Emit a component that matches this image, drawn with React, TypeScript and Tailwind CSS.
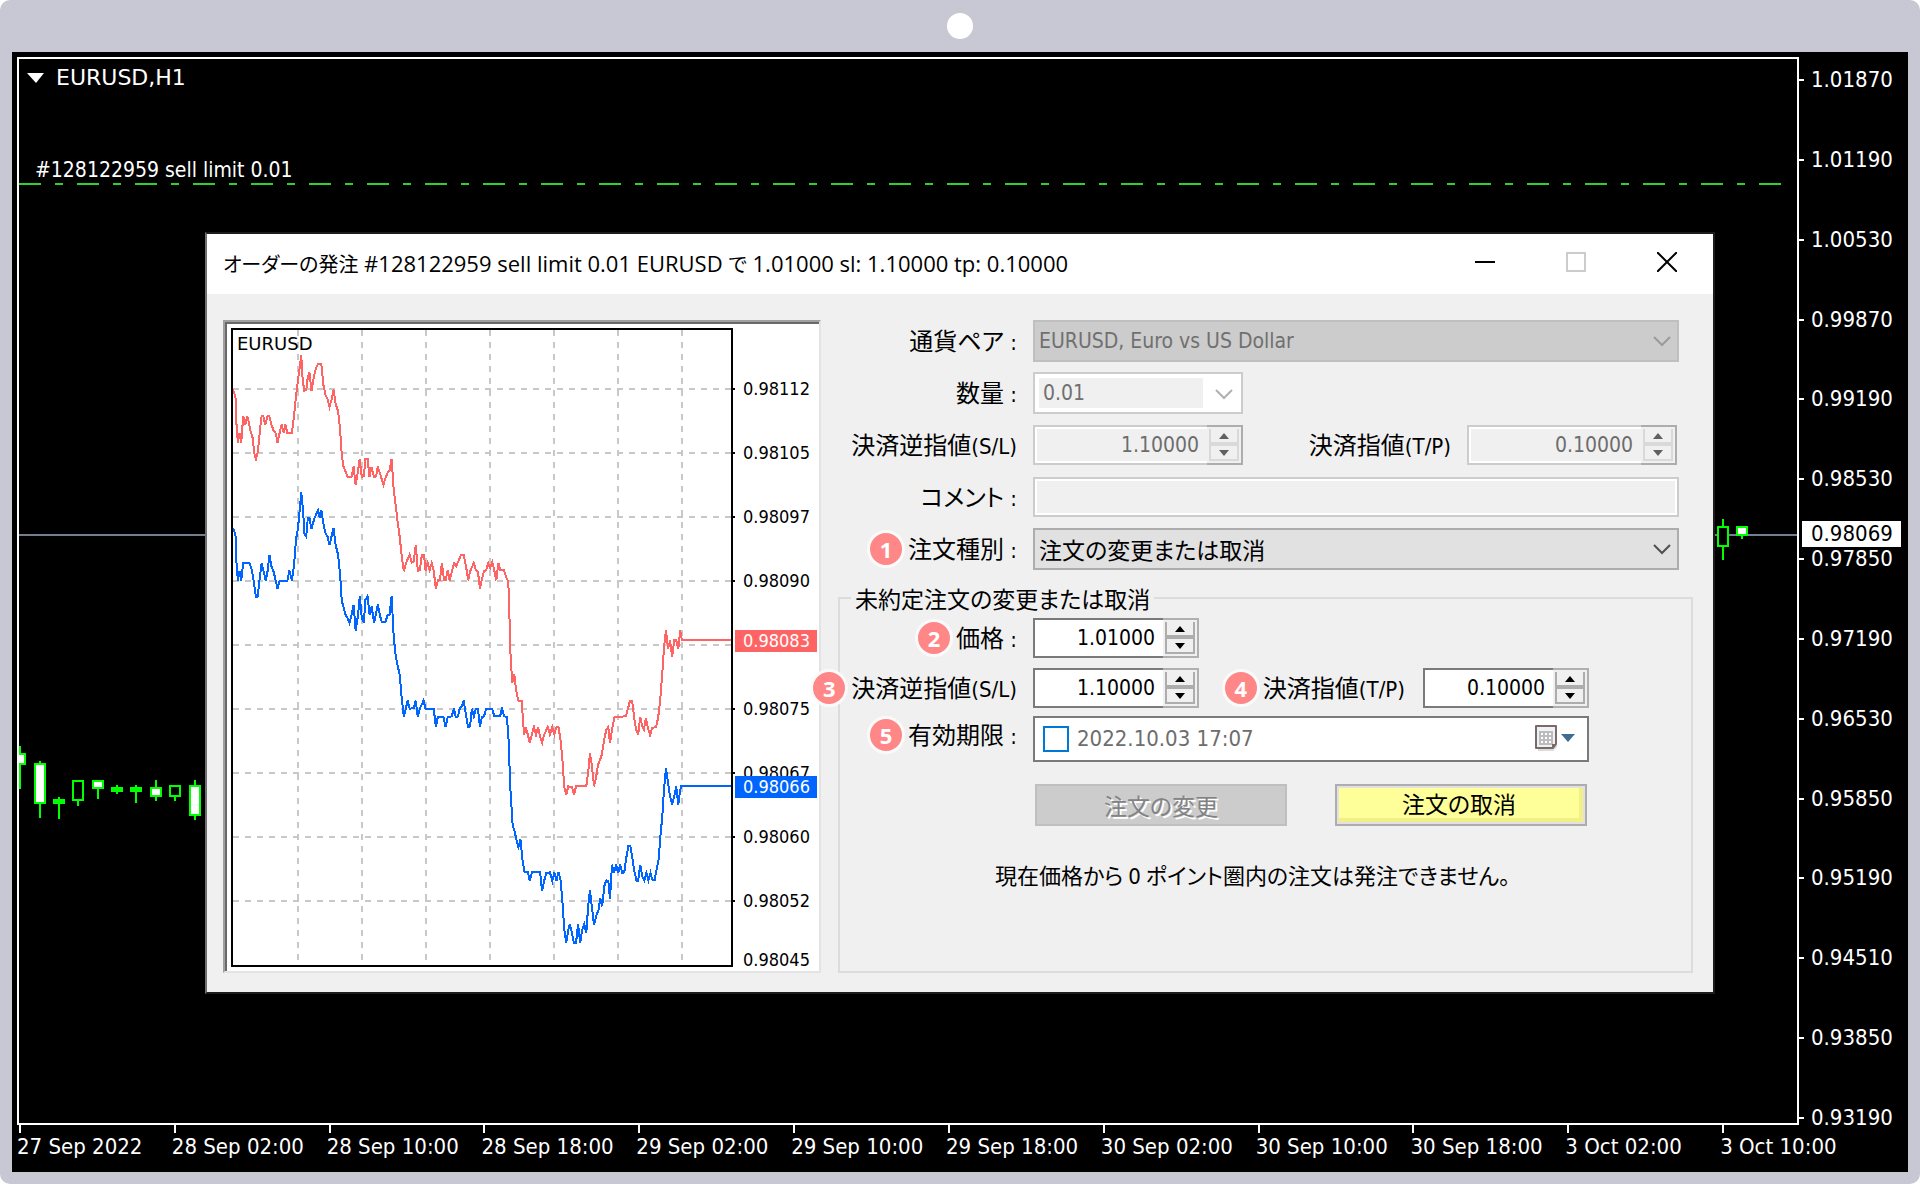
import React, { useState } from 'react';

const LATIN = "font-['DejaVu_Sans_Condensed','DejaVu_Sans',sans-serif]";
const JP = "font-['Noto_Sans_CJK_JP',sans-serif] [font-feature-settings:'palt']";

const prices = [
  '1.01870', '1.01190', '1.00530', '0.99870', '0.99190', '0.98530', '0.97850',
  '0.97190', '0.96530', '0.95850', '0.95190', '0.94510', '0.93850', '0.93190',
];

const times = [
  '27 Sep 2022', '28 Sep 02:00', '28 Sep 10:00', '28 Sep 18:00', '29 Sep 02:00', '29 Sep 10:00',
  '29 Sep 18:00', '30 Sep 02:00', '30 Sep 10:00', '30 Sep 18:00', '3 Oct 02:00', '3 Oct 10:00',
];

interface Candle {
  x: number;
  high: number;
  low: number;
  top: number;
  bottom: number;
  fill: string;
}

const candles: Candle[] = [
  { x: 1, high: 687, low: 730, top: 694, bottom: 706, fill: '#fff' },
  { x: 21, high: 702, low: 759, top: 704, bottom: 745, fill: '#fff' },
  { x: 40, high: 738, low: 760, top: 740, bottom: 745, fill: '#0f0' },
  { x: 59, high: 721, low: 747, top: 721, bottom: 742, fill: '#000' },
  { x: 79, high: 721, low: 740, top: 721, bottom: 730, fill: '#fff' },
  { x: 98, high: 726, low: 735, top: 728, bottom: 733, fill: '#0f0' },
  { x: 117, high: 726, low: 744, top: 728, bottom: 733, fill: '#0f0' },
  { x: 137, high: 721, low: 742, top: 728, bottom: 738, fill: '#fff' },
  { x: 156, high: 726, low: 742, top: 726, bottom: 738, fill: '#000' },
  { x: 176, high: 721, low: 761, top: 726, bottom: 757, fill: '#fff' },
  { x: 1704, high: 460, low: 501, top: 467, bottom: 488, fill: '#000' },
  { x: 1723, high: 467, low: 480, top: 467, bottom: 477, fill: '#fff' },
];

const askLine =
  '82,270 88,290 90,365 94,430 98,400 102,430 107,350 112,375 117,350 122,375 124,390 130,415 134,460 138,478 143,455 148,390 152,350 156,350 161,375 166,350 171,350 176,375 181,392 187,402 191,430 196,400 201,375 206,400 210,375 215,400 226,400 231,350 236,290 241,240 246,195 249,165 251,222 256,273 261,272 265,232 269,218 274,273 280,230 285,205 290,193 298,193 303,255 308,285 313,297 318,322 323,300 328,270 333,312 339,335 344,390 348,465 352,500 357,515 362,532 372,532 377,500 382,557 388,512 392,477 397,532 402,530 406,477 411,477 416,532 421,502 427,532 432,530 436,500 441,520 450,555 455,535 460,520 465,512 470,477 475,570 480,618 485,670 490,714 495,773 500,815 505,790 514,765 519,788 524,785 529,735 534,813 539,812 544,765 549,765 553,813 558,790 563,812 568,790 573,813 578,868 583,842 588,840 593,790 598,840 602,842 607,812 612,842 618,812 623,790 628,800 633,785 640,765 646,765 652,800 657,842 662,815 671,790 676,812 681,815 686,868 691,838 696,815 701,812 706,790 711,805 716,788 721,812 726,842 731,790 736,812 745,812 750,832 755,845 757,893 760,1048 765,1150 770,1125 775,1175 780,1203 788,1205 791,1255 794,1305 798,1282 803,1305 808,1330 813,1305 818,1282 823,1305 828,1282 833,1310 838,1330 843,1305 852,1282 857,1305 863,1282 868,1305 873,1282 878,1282 883,1320 888,1385 892,1460 897,1486 902,1460 911,1462 916,1486 921,1460 946,1460 951,1415 955,1360 960,1400 965,1460 970,1433 975,1395 983,1370 990,1320 995,1290 1000,1282 1004,1330 1009,1290 1015,1252 1043,1250 1048,1227 1053,1203 1058,1203 1063,1252 1068,1290 1073,1306 1078,1252 1083,1280 1087,1290 1092,1255 1097,1285 1102,1306 1107,1285 1117,1282 1122,1252 1127,1200 1132,1120 1136,1045 1141,992 1146,1048 1151,1022 1156,1072 1161,1022 1166,1022 1171,1048 1176,992 1180,1022 1303,1022';

const bidLine =
  '82,685 88,705 90,780 94,843 98,815 102,843 107,790 122,790 127,805 132,840 138,892 142,892 147,840 152,790 157,815 162,843 167,812 171,765 176,800 181,815 187,845 191,868 196,843 215,843 220,812 226,843 231,800 236,720 241,685 246,620 249,578 254,640 256,700 261,710 265,655 269,655 274,688 280,660 285,645 290,632 294,655 298,632 303,670 308,700 313,710 318,736 323,710 328,685 333,736 339,765 344,825 348,905 352,920 357,945 362,955 367,970 372,945 377,915 382,993 388,945 392,890 397,955 402,970 406,900 411,890 416,945 421,920 427,970 432,940 436,915 441,945 446,968 455,968 460,945 465,945 470,890 475,1010 480,1070 485,1100 490,1127 495,1200 500,1252 505,1225 509,1203 514,1227 524,1225 529,1203 534,1252 539,1227 548,1203 553,1227 573,1227 578,1282 583,1252 597,1252 602,1282 607,1252 617,1250 622,1227 627,1252 632,1250 637,1225 642,1220 646,1203 651,1240 657,1282 662,1280 666,1227 671,1250 676,1227 681,1227 686,1282 691,1252 696,1250 701,1227 716,1227 721,1250 735,1250 740,1227 745,1250 752,1252 756,1320 760,1460 766,1578 771,1595 775,1620 780,1642 785,1620 790,1680 795,1718 803,1718 808,1744 813,1718 833,1718 838,1774 843,1744 848,1720 857,1718 863,1744 868,1718 873,1744 878,1718 883,1740 888,1810 892,1887 897,1930 902,1890 906,1873 911,1900 916,1930 921,1930 926,1873 931,1930 936,1890 941,1873 946,1900 951,1815 955,1770 960,1825 965,1876 970,1850 976,1830 980,1795 985,1820 990,1760 995,1742 1000,1745 1004,1798 1009,1695 1014,1720 1019,1695 1024,1720 1029,1695 1034,1720 1039,1718 1043,1680 1049,1640 1054,1640 1058,1670 1063,1710 1069,1744 1073,1744 1078,1695 1083,1730 1088,1742 1093,1720 1098,1742 1103,1720 1108,1742 1113,1742 1118,1710 1123,1680 1128,1600 1132,1550 1136,1470 1141,1405 1146,1450 1151,1490 1156,1515 1161,1490 1166,1460 1171,1515 1176,1470 1178,1460 1303,1460';

const tickPrices = ['0.98112', '0.98105', '0.98097', '0.98090', '', '0.98075', '0.98067', '0.98060', '0.98052'];

const Badge: React.FC<{ n: number }> = ({ n }) => (
  <span className="relative z-10 mr-[3px] flex size-[38px] shrink-0 items-center justify-center rounded-full border-[3px] border-[#fafafa] bg-[#ff8787] font-['Noto_Sans',sans-serif] text-[22px] leading-[22px] font-bold text-white">
    {n}
  </span>
);

const Label: React.FC<{ id?: string; text: string; tail: string; badge?: number }> = ({ id, text, tail, badge }) => (
  <div className="flex items-center justify-end">
    {badge && <Badge n={badge} />}
    <label htmlFor={id} className={`${JP} whitespace-pre text-[24px] leading-[28px]`}>
      {text}
      <span className={`${LATIN} text-[22px]`}>{tail}</span>
    </label>
  </div>
);

const Chevron: React.FC<{ className: string }> = ({ className }) => (
  <svg viewBox="0 0 18 12" className={`pointer-events-none h-3 w-[18px] fill-none stroke-2 ${className}`}>
    <path d="M1 2l8 8 8-8" />
  </svg>
);

interface SpinProps {
  id: string;
  value: string;
  className: string;
  disabled?: boolean;
}

const Spin: React.FC<SpinProps> = ({ id, value, className, disabled }) => {
  const [text, setText] = useState(value);
  const step = (d: number) => setText((Number(text) + d * 0.00001).toFixed(5));
  const frame = disabled ? 'border-[#ccc]' : 'border-[#7a7a7a]';
  const side = disabled ? 'border-[#adadad] text-[#606060]' : 'border-[#b0b0b0] text-black';
  const btn = disabled ? 'border-[#d9d9d9]' : 'border-[#adadad]';
  return (
    <div className={`flex h-10 ${className}`}>
      <input
        id={id}
        value={text}
        disabled={disabled}
        onChange={(e) => setText(e.target.value)}
        className={`min-w-0 flex-1 border-2 border-r-0 ${frame} ${LATIN} pr-2 text-right text-[21px] outline-none ${disabled ? 'bg-[#f0f0f0] text-[#6d6d6d] shadow-[inset_2px_2px_0_#fff,inset_0_-2px_0_#fff]' : 'bg-white'}`}
      />
      <div className={`flex w-9 flex-col border-2 border-l-0 bg-[#f0f0f0] py-0.5 pr-0.5 pl-0.5 ${side}`}>
        <button type="button" aria-label="up" disabled={disabled} onClick={() => step(1)} className={`flex flex-1 items-center justify-center border-x-2 border-b-2 ${btn}`}>
          <svg viewBox="0 0 10 6" className="h-1.5 w-2.5 fill-current"><path d="M5 0l5 6H0z" /></svg>
        </button>
        <button type="button" aria-label="down" disabled={disabled} onClick={() => step(-1)} className={`flex flex-1 items-center justify-center border-2 ${btn}`}>
          <svg viewBox="0 0 10 6" className="h-1.5 w-2.5 fill-current"><path d="M0 0h10L5 6z" /></svg>
        </button>
      </div>
    </div>
  );
};

const TickChart: React.FC = () => (
  <div className="relative flex w-[598px] shrink-0 border-2 border-t-[#a0a0a0] border-r-[#e3e3e3] border-b-[#e3e3e3] border-l-[#a0a0a0]">
    <div className="flex flex-1 border-t-2 border-l-2 border-[#696969] bg-white pt-1 pb-1 pl-1">
      <div className="relative w-[502px] border-2 border-black">
        <svg viewBox="82 91 1218 1905" preserveAspectRatio="none" className="absolute inset-0 h-full w-full fill-none stroke-2" shapeRendering="crispEdges">
          {[240, 397, 553, 710, 867, 1024, 1180].map((x) => (
            <path key={x} d={`M${x} 91V1996`} stroke="#c8c8c8" strokeDasharray="6 6" vectorEffect="non-scaling-stroke" />
          ))}
          {[267, 459, 651, 843, 1035, 1227, 1419, 1611, 1803].map((y) => (
            <path key={y} d={`M82 ${y}H1300`} stroke="#c8c8c8" strokeDasharray="6 6" vectorEffect="non-scaling-stroke" />
          ))}
          <polyline points={askLine} stroke="#ff6464" vectorEffect="non-scaling-stroke" />
          <polyline points={bidLine} stroke="#0064ff" vectorEffect="non-scaling-stroke" />
        </svg>
        <span className="relative block pl-1 font-['DejaVu_Sans',sans-serif] text-[18px] leading-[28px]">EURUSD</span>
      </div>
      <ul className={`relative flex-1 pt-[29px] ${LATIN} text-[18px] leading-[22px]`}>
        {tickPrices.map((p, i) =>
          p ? (
            <li key={i} className="flex h-16 items-center gap-2">
              <span className="h-0.5 w-0.5 bg-black" />
              {p}
            </li>
          ) : (
            <li key={i} className="flex h-16 items-center pb-2">
              <span className="ml-0.5 w-[82px] bg-[#ff6464] pl-2 text-white">0.98083</span>
            </li>
          ),
        )}
        <li className="-mb-1 flex h-[38px] items-end pl-2.5">0.98045</li>
        <li className="absolute top-[448px] left-0.5 w-[82px] bg-[#0064ff] pl-2 text-white">0.98066</li>
      </ul>
    </div>
  </div>
);

const OrderDialog: React.FC = () => (
  <section className="absolute top-[173px] right-[82px] left-[186px] border-2 border-[#1c1c1c] border-l-[#707070] bg-[#f0f0f0] text-black">
    <header className="flex h-[60px] items-center justify-between bg-white pr-9 pl-4">
      <h1 className="font-['Open_Sans','Noto_Sans_CJK_JP',sans-serif] text-[22px] leading-7 whitespace-pre [font-feature-settings:'palt']">
        <span className="text-[20px]">オーダーの発注</span> #128122959 sell limit 0.01 EURUSD <span className="text-[20px]">で</span> 1.01000 sl: 1.10000 tp: 0.10000
      </h1>
      <div className="flex items-center gap-[71px] pb-1">
        <button type="button" aria-label="minimize" className="flex size-5 items-center">
          <span className="h-0.5 w-5 bg-black" />
        </button>
        <button type="button" aria-label="maximize" disabled className="size-5 border-2 border-[#ccc]" />
        <button type="button" aria-label="close" className="size-5">
          <svg viewBox="0 0 20 20" className="size-5 stroke-black stroke-2"><path d="M0 0l20 20M20 0L0 20" /></svg>
        </button>
      </div>
    </header>

    <div className="flex gap-[17px] pt-[26px] pr-5 pb-[19px] pl-4">
      <TickChart />

      <form className="flex min-w-0 flex-1 flex-col" onSubmit={(e) => e.preventDefault()}>
        <div className="grid auto-rows-[42px] grid-cols-[179px_1fr] items-center gap-x-4 gap-y-2.5 pr-3.5">
          <Label id="symbol" text="通貨ペア" tail=" :" />
          <div className="relative">
            <select id="symbol" disabled className={`h-[42px] w-full appearance-none border-2 border-[#bfbfbf] bg-[#ccc] pl-1 ${LATIN} text-[21px] text-[#707070] opacity-100`}>
              <option>EURUSD, Euro vs US Dollar</option>
            </select>
            <Chevron className="absolute top-[15px] right-2 stroke-[#9a9a9a]" />
          </div>

          <Label id="volume" text="数量" tail=" :" />
          <div className="relative flex h-[42px] w-[210px] border-2 border-[#ccc] bg-white p-1">
            <select id="volume" disabled className={`w-[164px] appearance-none bg-[#f0f0f0] pl-1 ${LATIN} text-[21px] text-[#707070] opacity-100`}>
              <option>0.01</option>
            </select>
            <Chevron className="absolute top-[14px] right-2 stroke-[#b0b0b0]" />
          </div>

          <Label id="sl" text="決済逆指値" tail="(S/L)" />
          <div className="flex items-center justify-between pr-0.5">
            <Spin id="sl" value="1.10000" disabled className="w-[210px]" />
            <div className="flex items-center gap-4">
              <Label id="tp" text="決済指値" tail="(T/P)" />
              <Spin id="tp" value="0.10000" disabled className="w-[210px]" />
            </div>
          </div>

          <Label id="comment" text="コメント" tail=" :" />
          <input id="comment" disabled className="h-10 w-full border-2 border-[#ccc] bg-[#f0f0f0] shadow-[inset_0_0_0_2px_#fff]" />

          <Label id="type" text="注文種別" tail=" :" badge={1} />
          <div className="relative">
            <select id="type" className={`h-[42px] w-full appearance-none border-2 border-[#adadad] bg-[#e1e1e1] pl-1 ${JP} text-[23px]`}>
              <option>注文の変更または取消</option>
            </select>
            <Chevron className="absolute top-[15px] right-2 stroke-[#505050]" />
          </div>
        </div>

        <fieldset className="mt-3.5 flex-1 border-2 border-[#dcdcdc]">
          <legend className={`ml-[11px] px-1 ${JP} text-[23px] leading-[28px]`}>未約定注文の変更または取消</legend>
          <div className="grid grid-cols-[177px_556px] items-center gap-x-4 pt-1.5">
            <Label id="price" text="価格" tail=" :" badge={2} />
            <Spin id="price" value="1.01000" className="w-[166px]" />

            <div className="-ml-8 pt-2.5">
              <Label id="sl2" text="決済逆指値" tail="(S/L)" badge={3} />
            </div>
            <div className="flex items-center justify-between pt-2.5">
              <Spin id="sl2" value="1.10000" className="w-[166px]" />
              <div className="flex items-center gap-[18px]">
                <Label id="tp2" text="決済指値" tail="(T/P)" badge={4} />
                <Spin id="tp2" value="0.10000" className="w-[166px]" />
              </div>
            </div>

            <Label id="expiry" text="有効期限" tail=" :" badge={5} />
            <div className="pt-2">
              <div className="flex h-[46px] items-center border-2 border-[#7a7a7a] bg-white pr-3 pl-2">
                <input type="checkbox" aria-label="有効期限" className="size-[26px] appearance-none border-2 border-[#0078d7] bg-white checked:bg-[#0078d7]" />
                <input id="expiry" defaultValue="2022.10.03 17:07" className={`ml-2 min-w-0 flex-1 ${LATIN} text-[22px] text-[#6d6d6d] outline-none`} />
                <button type="button" aria-label="calendar" className="flex items-center gap-1 pb-0.5">
                  <svg viewBox="0 0 22 26" className="h-[26px] w-[22px]">
                    <path d="M3 5h19v17l-4 4H3z" fill="#dcdcdc" />
                    <path d="M1 1h20v18l-3 4H1z" fill="#eef1f5" stroke="#7b6a68" strokeWidth="2" strokeLinejoin="round" />
                    <path d="M4 6h14v14H4z" fill="#bcbcbc" />
                    <path d="M6 8h2v2H6zM10 8h2v2h-2zM14 8h2v2h-2zM6 12h2v2H6zM10 12h2v2h-2zM14 12h2v2h-2zM6 16h2v2H6zM10 16h2v2h-2zM14 16h2v2h-2z" fill="#fff" />
                    <path d="M17 23v-4h4z" fill="#7b6a68" />
                  </svg>
                  <svg viewBox="0 0 14 8" className="h-2 w-3.5 fill-[#3f6c8f]"><path d="M0 0h14L7 8z" /></svg>
                </button>
              </div>
            </div>
          </div>

          <div className={`mt-[22px] ml-[195px] flex w-[552px] justify-between ${JP} text-[23px]`}>
            <button type="button" disabled className="h-[42px] w-[252px] border-2 border-[#bfbfbf] bg-[#ccc] leading-[28px] text-[#838383] [text-shadow:2px_2px_0_#fff]">
              注文の変更
            </button>
            <button type="button" className="h-[42px] w-[252px] border-2 border-[#adadad] bg-[#e1e1e1] p-0.5">
              <span className="flex h-full items-center justify-center border-r-4 border-b-4 border-[#f0f087] bg-[#ffff99] leading-[28px]">注文の取消</span>
            </button>
          </div>

          <p className={`mt-[34px] ml-[155px] ${JP} text-[22px] leading-[28px]`}>
            現在価格から <span className={LATIN}>0</span> ポイント圏内の注文は発注できません。
          </p>
        </fieldset>
      </form>
    </div>
  </section>
);

export default function App() {
  return (
    <div className="bg-white">
      <div className="flex min-h-screen flex-col rounded-[10px] bg-[#c8c8d4] px-3 pb-3">
        <div className="flex h-[52px] items-center justify-center">
          <span className="size-[26px] rounded-full bg-white" />
        </div>

        <main className={`grid flex-1 grid-cols-[1fr_109px] grid-rows-[1fr_47px] bg-black pt-[5px] pl-[5px] text-white ${LATIN} text-[22px] leading-[28px]`}>
          <div className="relative col-start-1 row-start-1 border-2 border-white">
            <svg viewBox="0 0 1778 1064" className="absolute inset-0 h-full w-full" shapeRendering="crispEdges">
              <path d="M0 125H1764" stroke="#32cd32" strokeWidth="2" strokeDasharray="22 14 8 14" />
              <path d="M0 476H1778" stroke="#708090" strokeWidth="2" />
              {candles.map((c) => (
                <g key={c.x} stroke="#0f0" strokeWidth="2">
                  <path d={`M${c.x} ${c.high}V${c.low}`} />
                  <rect x={c.x - 5} y={c.top + 1} width="10" height={c.bottom - c.top - 2} fill={c.fill} />
                </g>
              ))}
            </svg>
            <div className="relative flex items-center gap-3 pt-[5px] pl-2">
              <svg viewBox="0 0 17 10" className="h-2.5 w-[17px] fill-white"><path d="M0 0h17L9 10z" /></svg>
              <span className="font-['DejaVu_Sans',sans-serif]">EURUSD,H1</span>
            </div>
            <p className="relative mt-16 ml-4 text-[21px]">#128122959 sell limit 0.01</p>
            <OrderDialog />
          </div>

          <ul className="relative col-start-2 row-span-2 row-start-1 flex flex-col justify-between pt-[9px] pb-10">
            {prices.map((p) => (
              <li key={p} className="flex items-center gap-[7px]">
                <span className="h-0.5 w-[5px] bg-white" />
                {p}
              </li>
            ))}
            <li className="absolute top-[464px] left-[3px] w-[99px] bg-white pl-[9px] leading-[26px] text-black">0.98069</li>
          </ul>

          <ul className="col-span-2 col-start-1 row-start-2 mr-[33px] grid grid-cols-12">
            {times.map((t) => (
              <li key={t} className="whitespace-nowrap">
                <span className="ml-0.5 block h-2 w-0.5 bg-white" />
                {t}
              </li>
            ))}
          </ul>
        </main>
      </div>
    </div>
  );
}
